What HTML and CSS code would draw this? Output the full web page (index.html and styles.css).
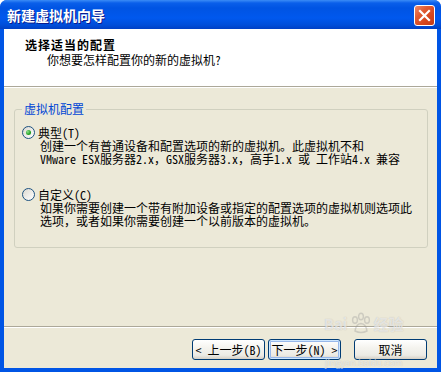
FILE: index.html
```html
<!DOCTYPE html>
<html lang="zh-CN">
<head>
  <meta charset="UTF-8">
  <title>新建虚拟机向导</title>
  <link rel="stylesheet" href="styles.css">
</head>
<body>
  <div class="window">
    <div class="titlebar">
      <span class="title">新建虚拟机向导</span>
      <button class="close" aria-label="关闭">
        <svg width="13" height="13" viewBox="0 0 13 13">
          <path d="M2 2 L11 11 M11 2 L2 11" stroke="#fff" stroke-width="2.2" stroke-linecap="square"/>
        </svg>
      </button>
    </div>

    <div class="client">
      <div class="header">
        <div class="h-title">选择适当的配置</div>
        <div class="h-sub">你想要怎样配置你的新的虚拟机?</div>
      </div>

      <div class="body">
        <fieldset class="group">
          <legend>虚拟机配置</legend>

          <div class="option">
            <div class="radio-row"><span class="radio checked"></span>典型(T)</div>
            <div class="desc">
              <span>创建一个有普通设备和配置选项的新的虚拟机。此虚拟机不和</span>
              <span>VMware ESX服务器2.x，GSX服务器3.x，高手1.x 或 工作站4.x 兼容</span>
            </div>
          </div>

          <div class="option second">
            <div class="radio-row"><span class="radio"></span>自定义(C)</div>
            <div class="desc">
              <span>如果你需要创建一个带有附加设备或指定的配置选项的虚拟机则选项此</span>
              <span>选项，或者如果你需要创建一个以前版本的虚拟机。</span>
            </div>
          </div>
        </fieldset>
      </div>

      <div class="footer">
        <button class="btn back">&lt; 上一步(B)</button>
        <button class="btn next default">下一步(N) &gt;</button>
        <button class="btn">取消</button>
      </div>
    </div>

    <!-- faint site watermark in the corner -->
    <div class="watermark">
      <span class="wm-logo">Bai
        <svg class="paw" width="24" height="24" viewBox="0 0 24 24">
          <g fill="none" stroke="rgba(150,150,150,0.35)" stroke-width="1.4">
            <ellipse cx="6" cy="8" rx="2.4" ry="3.2"/>
            <ellipse cx="12" cy="4.5" rx="2.4" ry="3.2"/>
            <ellipse cx="18" cy="8" rx="2.4" ry="3.2"/>
            <path d="M6 19 Q7 12 12 11.5 Q17 12 18 19 Q12 22 6 19 Z"/>
          </g>
        </svg>经验</span>
      <span class="wm-url">jingyan.baidu.com</span>
    </div>
  </div>
</body>
</html>
```

FILE: styles.css
```css
html, body {
  margin: 0;
  padding: 0;
  background: #fff;
}

.window {
  position: relative;
  width: 441px;
  height: 372px;
  display: flex;
  flex-direction: column;
  background: #0055e5;
  border-radius: 7px 7px 0 0;
  overflow: hidden;
  font-family: "Noto Sans Mono CJK SC", "Noto Sans CJK SC", sans-serif;
  font-size: 12px;
  color: #000;
}

/* ---------- title bar ---------- */
.titlebar {
  height: 29px;
  flex: none;
  display: flex;
  align-items: center;
  justify-content: space-between;
  padding: 0 6px 0 7px;
  box-sizing: border-box;
  background: linear-gradient(#3b8cf6 0, #0a5fea 3px, #0054e3 8px, #0058ee 18px, #004ed9 25px, #0040c4 29px);
}

.title {
  color: #fff;
  font-family: "Noto Sans CJK SC", sans-serif;
  font-weight: bold;
  font-size: 14px;
  line-height: 16px;
  margin-top: 1px;
  text-shadow: 1px 1px 0 #0a1c8c;
}

.close {
  width: 21px;
  height: 21px;
  padding: 0;
  margin-top: 1px;
  border: 1px solid #fff;
  border-radius: 3px;
  background: linear-gradient(135deg, #ed8a6a 0, #e05b33 35%, #d4441c 70%, #c23c18 100%);
  display: flex;
  align-items: center;
  justify-content: center;
}

/* ---------- client area ---------- */
.client {
  flex: 1;
  margin: 0 4px 4px;
  display: flex;
  flex-direction: column;
  background: #ece9d8;
}

.header {
  height: 58px;
  flex: none;
  box-sizing: border-box;
  padding: 9px 0 0 21px;
  background: #fff;
  border-bottom: 1px solid #aca899;
}
.h-title {
  font-family: "Noto Sans CJK SC", sans-serif;
  font-weight: bold;
  letter-spacing: 1px;
  line-height: 14px;
}
.h-sub {
  margin-top: 1px;
  padding-left: 22px;
  line-height: 14px;
}

.body {
  flex: 1;
  border-top: 1px solid #fff;
  padding: 14px 9px 0 10px;
}

.group {
  margin: 0;
  padding: 10px 7px 20px;
  border: 1px solid #d0d0bf;
  border-radius: 3px;
}
.group legend {
  padding: 0 2px;
  color: #0046d5;
  line-height: 14px;
}

.option.second {
  margin-top: 23px;
}

.radio-row {
  display: flex;
  align-items: center;
  gap: 3px;
  line-height: 13px;
  height: 13px;
}

.radio {
  width: 11px;
  height: 11px;
  border: 1px solid #1c5180;
  border-radius: 50%;
  background: linear-gradient(135deg, #dcd9d0, #fff);
  position: relative;
  flex: none;
}
.radio.checked::after {
  content: "";
  position: absolute;
  left: 3px;
  top: 3px;
  width: 5px;
  height: 5px;
  border-radius: 50%;
  background: radial-gradient(circle at 35% 35%, #8ee08e, #21a121 60%, #18861c);
}

.desc {
  margin-left: 18px;
}
.desc span {
  display: block;
  white-space: nowrap;
  line-height: 13px;
}

/* ---------- buttons ---------- */
.footer {
  height: 42px;
  flex: none;
  box-sizing: border-box;
  border-top: 1px solid #aca899;
  box-shadow: inset 0 1px 0 #fff;
  padding: 12px 10px 0 0;
  display: flex;
  justify-content: flex-end;
}

.btn {
  width: 73px;
  height: 21px;
  padding: 0;
  border: 1px solid #003c74;
  border-radius: 3px;
  background: linear-gradient(#ffffff 0, #f5f4ef 40%, #ecebe5 80%, #d6d0c5 100%);
  font-family: "Noto Sans Mono CJK SC", "Noto Sans CJK SC", sans-serif;
  font-size: 12px;
  color: #000;
  white-space: nowrap;
}
.btn.back {
  margin-right: 3px;
}
.btn.next {
  margin-right: 13px;
}
.btn.default {
  box-shadow: inset 0 0 0 1px #cee7ff, inset 0 0 0 2px #98b8ea;
}

/* ---------- watermark ---------- */
.watermark {
  position: absolute;
  left: 324px;
  top: 312px;
  display: flex;
  flex-direction: column;
  align-items: center;
  pointer-events: none;
  color: rgba(255, 255, 255, 0.6);
  text-shadow: 0 0 1px rgba(110, 110, 110, 0.4);
  font-family: "Noto Sans CJK SC", sans-serif;
}
.wm-logo {
  display: flex;
  align-items: center;
  font-size: 15px;
  font-weight: bold;
  line-height: 24px;
}
.paw {
  margin: 0 1px;
}
.wm-url {
  font-size: 9px;
  line-height: 10px;
  margin-top: 22px;
}
```
